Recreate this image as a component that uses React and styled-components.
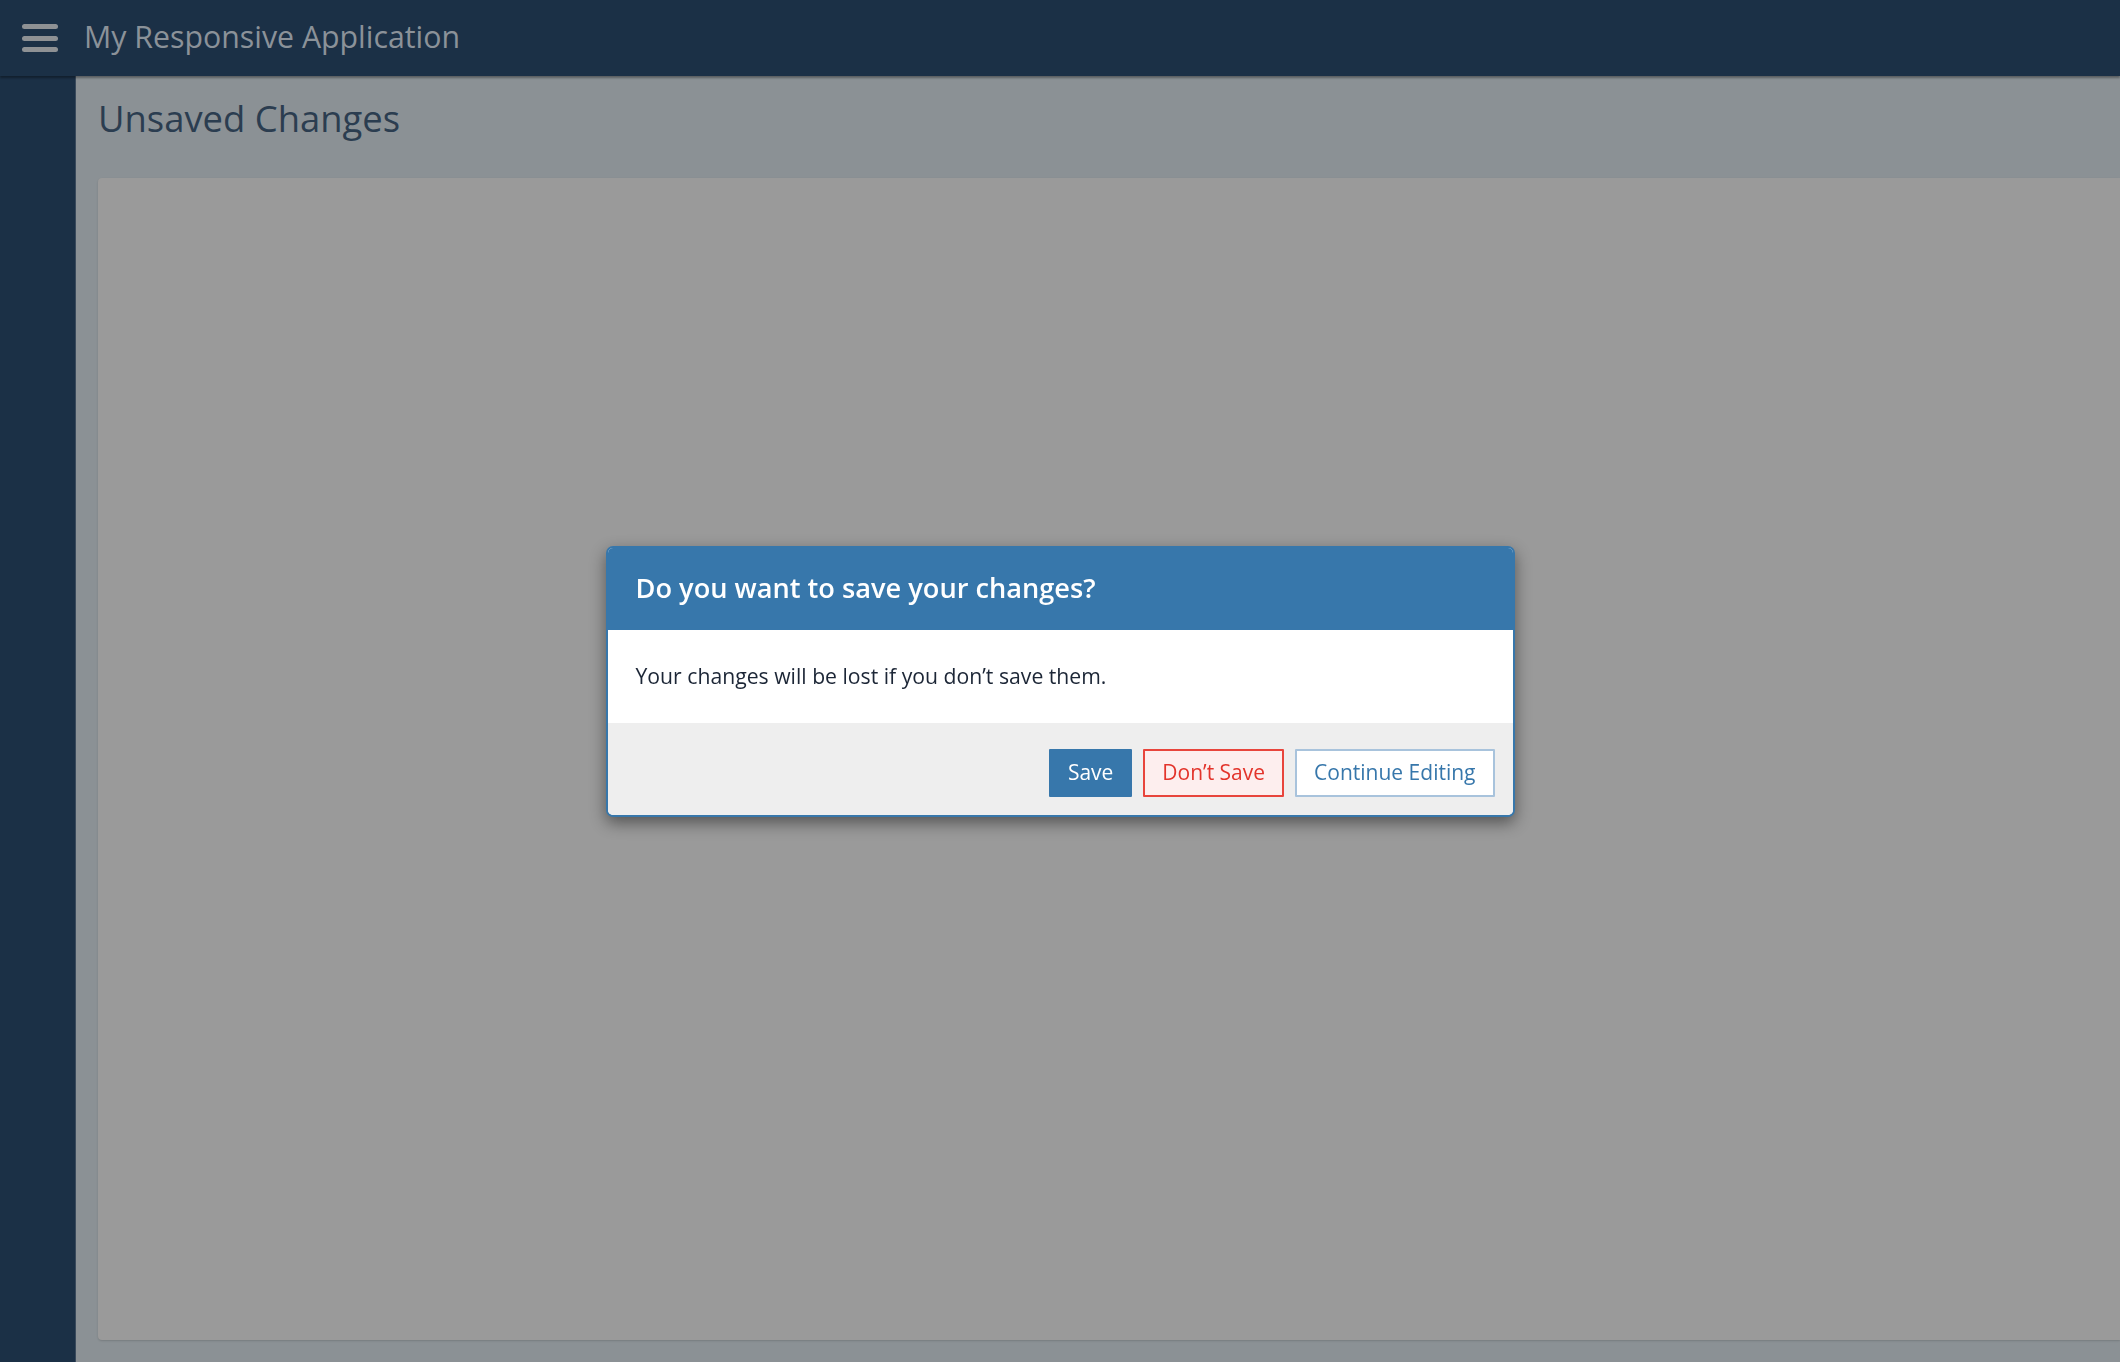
import React from 'react';
import styled, { createGlobalStyle } from 'styled-components';

const GlobalStyle = createGlobalStyle`
  html, body {
    margin: 0;
    padding: 0;
    height: 100%;
    overflow: hidden;
  }
  body {
    font-family: "Open Sans", "Liberation Sans", sans-serif;
  }
  * {
    box-sizing: border-box;
  }
`;

const Page = styled.div`
  display: grid;
  grid-template-rows: 76px 1fr;
  height: 100vh;
  background: #8b9195;
`;

const TopBar = styled.header`
  display: flex;
  align-items: center;
  gap: 26px;
  padding-left: 22px;
  background: #1b3046;
  box-shadow: 0 2px 2px rgba(0, 0, 0, 0.35);
  position: relative;
  z-index: 1;
`;

const MenuButton = styled.button`
  display: flex;
  flex-direction: column;
  justify-content: space-between;
  width: 36px;
  height: 28px;
  padding: 0;
  border: none;
  background: none;
`;

const MenuBar = styled.span`
  display: block;
  height: 5px;
  border-radius: 3px;
  background: #8e9194;
`;

const AppTitle = styled.h1`
  margin: 0 0 2px;
  font-size: 30.3px;
  line-height: 1;
  font-weight: 400;
  color: #8b9299;
`;

const Body = styled.div`
  display: flex;
  min-height: 0;
`;

const SideNav = styled.nav`
  width: 76px;
  flex-shrink: 0;
  background: #1b3046;
  border-right: 1px solid #3a4a5c;
`;

const Main = styled.main`
  flex: 1;
  display: flex;
  flex-direction: column;
  padding: 21px 0 22px 22px;
  min-width: 0;
`;

const PageTitle = styled.h2`
  margin: 0 0 37px;
  font-size: 36.4px;
  line-height: 1.2;
  font-weight: 400;
  color: #2b3d50;
`;

const Panel = styled.section`
  flex: 1;
  background: #9a9a9a;
  border-radius: 4px 0 0 4px;
  box-shadow: 0 1px 2px rgba(0, 0, 0, 0.15);
`;

const ModalLayer = styled.div`
  position: fixed;
  inset: 0;
  display: flex;
  align-items: center;
  justify-content: center;
  z-index: 10;
`;

const Dialog = styled.div`
  width: 909px;
  border: 2px solid #3777ab;
  border-radius: 7px;
  overflow: hidden;
  background: #fff;
  box-shadow: 0 6px 16px rgba(0, 0, 0, 0.45);
`;

const DialogHeader = styled.div`
  height: 82px;
  display: flex;
  align-items: center;
  padding: 0 28px;
  background: #3777ab;
`;

const DialogTitle = styled.h3`
  margin: 0 0 2px;
  font-size: 27.2px;
  line-height: 1;
  font-weight: 600;
  color: #fff;
`;

const DialogBody = styled.div`
  height: 93px;
  display: flex;
  align-items: center;
  padding: 0 28px;
  font-size: 21.2px;
  line-height: 1;
  color: #1c2636;
`;

const DialogFooter = styled.div`
  display: flex;
  justify-content: flex-end;
  gap: 11px;
  padding: 26px 18px 18px;
  background: #eeeeee;
`;

const variants = {
  primary: `
    background: #3777ab;
    border-color: #3777ab;
    color: #fff;
  `,
  danger: `
    background: #fdeeee;
    border-color: #e8453c;
    color: #e3342b;
  `,
  outline: `
    background: #fff;
    border-color: #a8c3dc;
    color: #3777ab;
  `,
};

const Button = styled.button`
  height: 48px;
  padding: 0 17px;
  border: 2px solid;
  border-radius: 1px;
  font-family: inherit;
  font-size: 21px;
  line-height: 1;
  cursor: pointer;
  ${({ $variant }) => variants[$variant]}
`;

export default function App() {
  return (
    <>
      <GlobalStyle />
      <Page>
        <TopBar>
          <MenuButton aria-label="menu">
            <MenuBar />
            <MenuBar />
            <MenuBar />
          </MenuButton>
          <AppTitle>My Responsive Application</AppTitle>
        </TopBar>
        <Body>
          <SideNav />
          <Main>
            <PageTitle>Unsaved Changes</PageTitle>
            <Panel />
          </Main>
        </Body>
      </Page>
      <ModalLayer>
        <Dialog role="dialog">
          <DialogHeader>
            <DialogTitle>Do you want to save your changes?</DialogTitle>
          </DialogHeader>
          <DialogBody>Your changes will be lost if you don’t save them.</DialogBody>
          <DialogFooter>
            <Button $variant="primary">Save</Button>
            <Button $variant="danger">Don’t Save</Button>
            <Button $variant="outline">Continue Editing</Button>
          </DialogFooter>
        </Dialog>
      </ModalLayer>
    </>
  );
}
